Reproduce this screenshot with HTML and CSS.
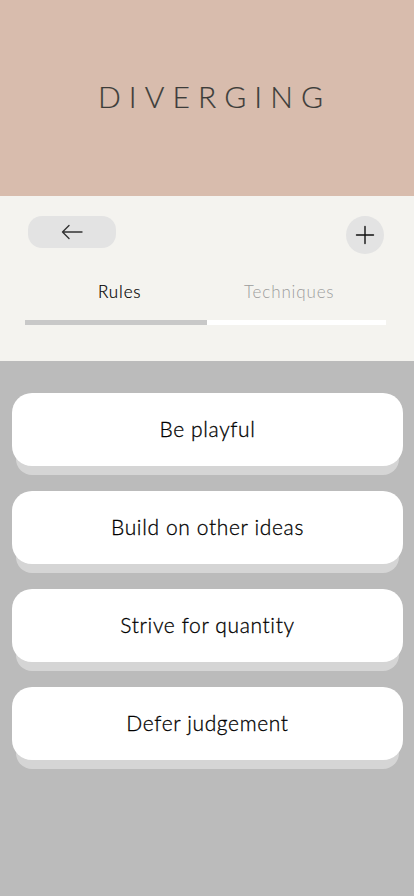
FILE: index.html
```html
<!DOCTYPE html>
<html>
<head>
<meta charset="utf-8">
<link rel="stylesheet" href="styles.css">
</head>
<body>
<div class="app">
  <header class="hero">
    <h1 class="title">DIVERGING</h1>
  </header>
  <section class="controls">
    <div class="toolbar">
      <button class="back-btn" aria-label="Back">
        <svg width="24" height="16" viewBox="0 0 24 16" fill="none" stroke="#333" stroke-width="1.4" stroke-linecap="round" stroke-linejoin="round">
          <path d="M22 8H2.5M9 1.5L2.5 8L9 14.5"/>
        </svg>
      </button>
      <button class="add-btn" aria-label="Add">
        <svg width="20" height="20" viewBox="0 0 20 20" fill="none" stroke="#111" stroke-width="1.4" stroke-linecap="round">
          <path d="M10 1.5V18.5M1.5 10H18.5"/>
        </svg>
      </button>
    </div>
    <div class="tabs">
      <div class="tab active">Rules</div>
      <div class="tab">Techniques</div>
    </div>
    <div class="tab-track">
      <div class="tab-ind on"></div>
      <div class="tab-ind"></div>
    </div>
  </section>
  <main class="list">
    <div class="card">Be playful</div>
    <div class="card">Build on other ideas</div>
    <div class="card">Strive for quantity</div>
    <div class="card">Defer judgement</div>
  </main>
</div>
</body>
</html>
```
FILE: styles.css
```css
* { box-sizing: border-box; }
html, body { margin: 0; padding: 0; }
body {
  width: 414px;
  height: 896px;
  background: #bbbbbb;
  font-family: Lato, "Noto Sans", sans-serif;
  overflow: hidden;
}
.app { display: flex; flex-direction: column; min-height: 896px; }
.hero {
  height: 196px;
  background: #d8bcad;
  display: flex;
  align-items: center;
  justify-content: center;
}
.title {
  margin: 0 0 4px 0;
  font-weight: 300;
  font-size: 30px;
  letter-spacing: 0.27em;
  padding-left: calc(0.27em + 7px);
  color: #3c3c3a;
  line-height: 1;
  -webkit-text-stroke: 0.2px #3c3c3a;
}
.controls {
  background: #f4f3ef;
  height: 165px;
  padding: 20px 28px 0 25px;
}
.toolbar {
  display: flex;
  justify-content: space-between;
  align-items: flex-start;
  padding-left: 3px;
  padding-right: 2px;
}
.back-btn {
  width: 88px;
  height: 32px;
  border: none;
  border-radius: 14px;
  background: #e3e3e3;
  display: flex;
  align-items: center;
  justify-content: center;
  padding: 0;
}
.add-btn {
  width: 38px;
  height: 38px;
  border: none;
  border-radius: 50%;
  background: #e3e3e3;
  display: flex;
  align-items: center;
  justify-content: center;
  padding: 0;
}
.tabs {
  display: flex;
  margin-top: 28px;
  width: 361px;
  padding: 0 12px 0 10px;
}
.tab {
  flex: 1;
  text-align: center;
  font-size: 17px;
  font-weight: 300;
  letter-spacing: 0.05em;
  color: #9c9c9c;
  line-height: 20px;
}
.tab.active { color: #000; -webkit-text-stroke: 0.2px #000; }
.tab-track {
  display: flex;
  width: 361px;
  height: 5px;
  margin-top: 18px;
}
.tab-ind { flex: 1; background: #ffffff; }
.tab-ind.on { background: #c8c8c8; flex: 0 0 182px; }
.list {
  padding: 32px 11px 0 12px;
  display: flex;
  flex-direction: column;
  gap: 25px;
}
.card {
  height: 73px;
  background: #fff;
  border-radius: 20px;
  display: flex;
  align-items: center;
  justify-content: center;
  font-size: 21px;
  font-weight: 300;
  letter-spacing: 0.03em;
  color: #000;
  -webkit-text-stroke: 0.3px #000;
  padding-bottom: 3px;
  box-shadow: 0 13px 0 -4px #d5d5d5;
}
```
